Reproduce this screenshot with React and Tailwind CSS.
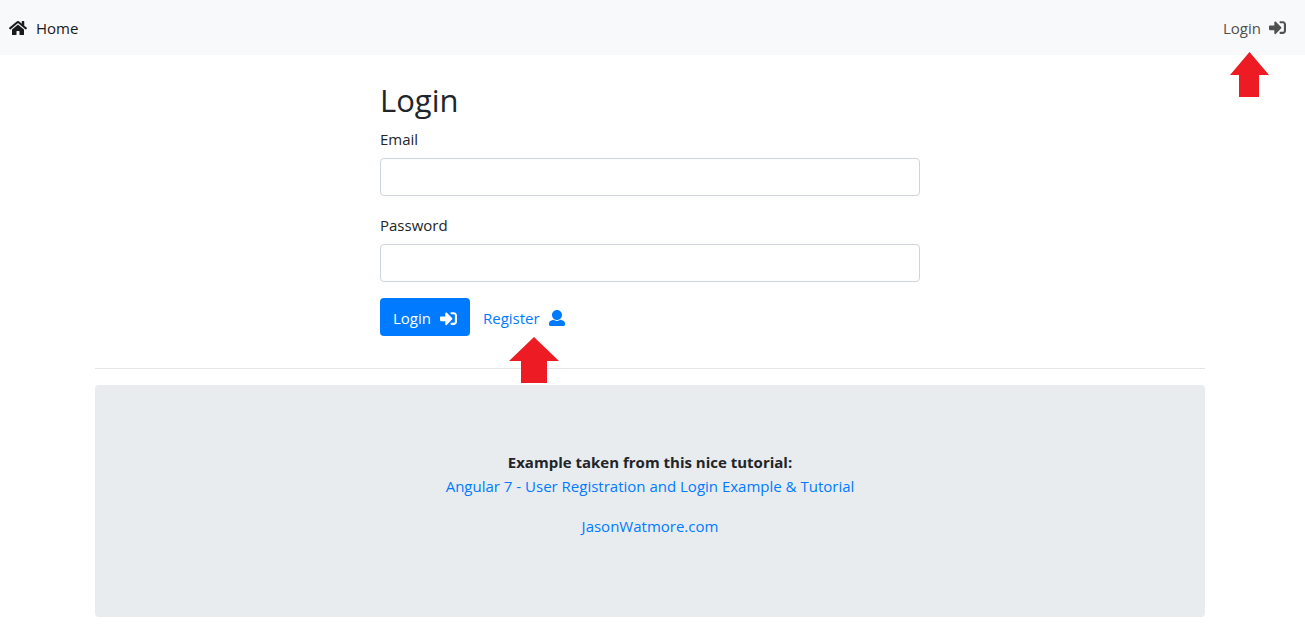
import { FaHome, FaSignInAlt } from "react-icons/fa";

function UserIcon({ className }) {
  return (
    <svg viewBox="0 0 512 512" fill="currentColor" className={className} aria-hidden="true">
      <path d="M256 0c88.366 0 160 71.634 160 160s-71.634 160-160 160S96 248.366 96 160 167.634 0 256 0zm183.283 333.821l-71.313-17.828c-74.923 53.89-165.738 41.864-223.94 0l-71.313 17.828C29.981 344.505 0 382.903 0 426.955V464c0 26.51 21.49 48 48 48h416c26.51 0 48-21.49 48-48v-37.045c0-44.052-29.981-82.45-72.717-93.134z" />
    </svg>
  );
}

function Field({ id, label, type }) {
  return (
    <div className="mb-4">
      <label htmlFor={id} className="mb-[7px] block pt-px">
        {label}
      </label>
      <input
        id={id}
        type={type}
        className="block h-[38px] w-full rounded border border-[#ced4da] bg-white px-3 text-base text-[#495057] outline-none focus:border-[#80bdff]"
      />
    </div>
  );
}

export default function App() {
  return (
    <div className="bg-white font-['Open_Sans','Noto_Sans',sans-serif] text-[15px] leading-6 text-[#212529]">
      <nav className="flex h-[55px] items-center justify-between bg-[#f8f9fa] pr-[19px] pl-[9px]">
        <a href="#home" className="flex items-center gap-[9px] pt-px text-[#1a1a1a]">
          <FaHome className="size-[18px]" />
          Home
        </a>
        <a href="#login" className="relative flex items-center gap-2 text-[#505050]">
          Login
          <FaSignInAlt className="size-[17px]" />
          <svg
            viewBox="0 0 39 45"
            className="absolute top-9 right-[17px] h-[45px] w-[39px]"
            aria-hidden="true"
          >
            <path d="M19.5 0 39 23H29V45H9V23H0Z" fill="#ed1c24" />
          </svg>
        </a>
      </nav>

      <div className="pr-[5px]">
        <main className="mx-auto max-w-[1140px] px-[15px] pt-[26px]">
          <form
            className="mx-auto max-w-[540px]"
            onSubmit={(event) => event.preventDefault()}
          >
            <h2 className="mb-[7px] text-[31px] leading-[38px]">Login</h2>
            <Field id="email" label="Email" type="text" />
            <Field id="password" label="Password" type="password" />
            <div className="flex items-center">
              <button
                type="submit"
                className="flex h-[38px] items-center gap-[9px] rounded bg-[#007bff] px-[13px] pt-0.5 text-white"
              >
                Login
                <FaSignInAlt className="size-[17px]" />
              </button>
              <a
                href="#register"
                className="relative flex h-[38px] items-center gap-[9px] px-[13px] pt-0.5 text-[#007bff]"
              >
                Register
                <UserIcon className="size-4" />
                <svg
                  viewBox="0 0 50 46"
                  className="absolute top-[39px] left-[39px] h-[46px] w-[50px]"
                  aria-hidden="true"
                >
                  <path d="M25 0 50 24H38V46H12V24H0Z" fill="#ed1c24" />
                </svg>
              </a>
            </div>
          </form>

          <hr className="mt-8 mb-4 border-t border-[#e5e5e5]" />

          <section className="rounded bg-[#e8ecef] px-8 pt-[65px] pb-[63px] text-center">
            <p className="mb-4">
              <strong className="font-bold">Example taken from this nice tutorial:</strong>
              <br />
              <a href="#tutorial" className="text-[#007bff]">
                Angular 7 - User Registration and Login Example &amp; Tutorial
              </a>
            </p>
            <p className="mb-4">
              <a href="#author" className="text-[#007bff]">
                JasonWatmore.com
              </a>
            </p>
          </section>
        </main>
      </div>
    </div>
  );
}
